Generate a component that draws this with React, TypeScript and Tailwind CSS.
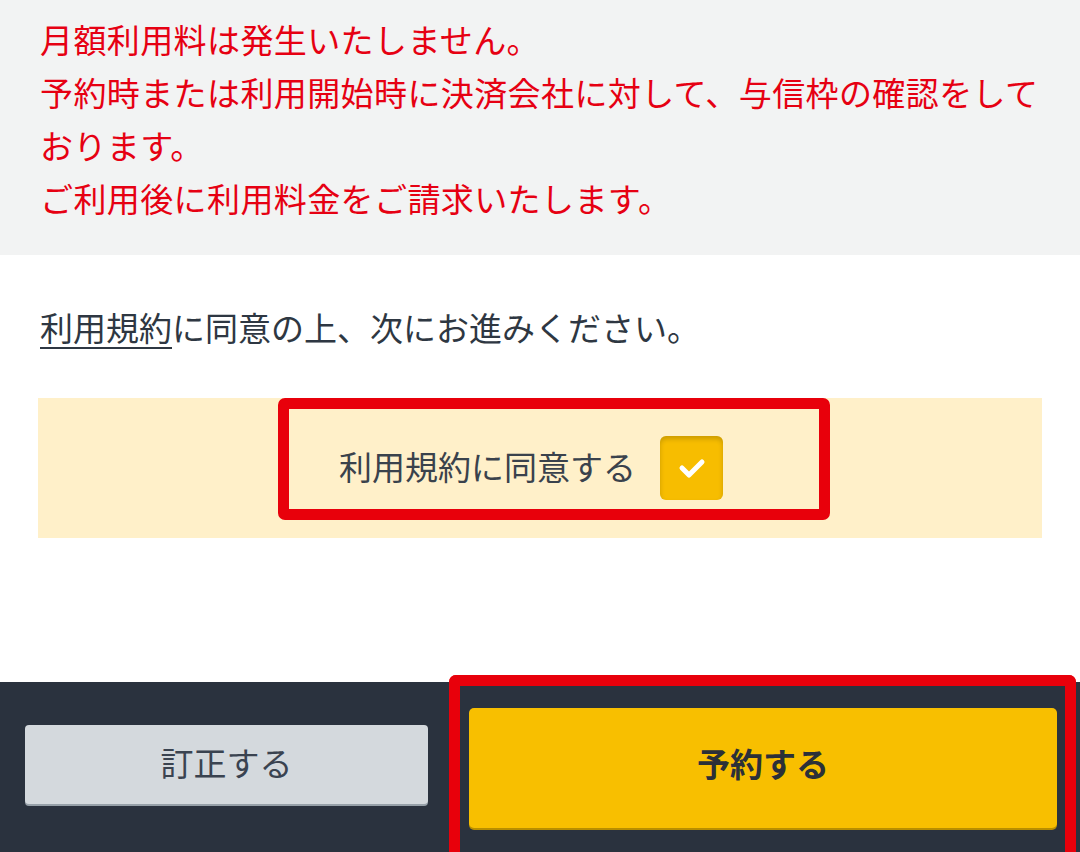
import React, { useState } from 'react';

const notices = [
  '月額利用料は発生いたしません。',
  '予約時または利用開始時に決済会社に対して、与信枠の確認をしております。',
  'ご利用後に利用料金をご請求いたします。',
];

export default function App() {
  const [agreed, setAgreed] = useState(true);

  return (
    <div className="w-[1080px] h-[852px] overflow-hidden bg-white flex flex-col font-['Noto_Sans_CJK_JP','Noto_Sans',sans-serif]">
      {/* Payment notice */}
      <div className="bg-[#f2f3f3] pl-10 pr-[38px] pt-[13px] pb-[30px]">
        {notices.map((line) => (
          <p key={line} className="text-[33px] tracking-[0.4px] leading-[53px] text-[#e60012]">
            {line}
          </p>
        ))}
      </div>

      {/* Terms agreement */}
      <p className="mt-[46px] px-10 text-[33px] leading-[53px] text-[#2e3742]">
        <span className="underline decoration-2 underline-offset-[6px]">利用規約</span>
        に同意の上、次にお進みください。
      </p>

      <div className="relative mx-[38px] mt-[44px] h-[140px] bg-[#fff0c9] flex items-center justify-center pr-[18px]">
        <span className="text-[33px] leading-none text-[#3a424c] -mt-[4px]">利用規約に同意する</span>
        <button
          onClick={() => setAgreed(!agreed)}
          className={`ml-6 w-[63px] h-[64px] rounded-md flex items-center justify-center shadow-[inset_0_3px_5px_rgba(0,0,0,0.18)] ${
            agreed ? 'bg-[#f7bd00]' : 'bg-white'
          }`}
        >
          {agreed && (
            <svg width="28" height="22" viewBox="0 0 28 22" fill="none">
              <polyline points="4,11 11,18 24,5" stroke="white" strokeWidth="5" strokeLinecap="round" strokeLinejoin="round" />
            </svg>
          )}
        </button>
        {/* annotation frame */}
        <div className="absolute left-[240px] top-0 w-[552px] h-[122px] border-[11px] border-[#e8000b] rounded-[7px] pointer-events-none" />
      </div>

      {/* Footer actions */}
      <div className="relative mt-[144px] h-[170px] bg-[#2a323e] flex items-start pl-[25px]">
        <button className="mt-[43px] w-[403px] h-[79px] pb-[4px] rounded-[4px] bg-[#d4d9dd] shadow-[0_2px_0_#96a0a8] text-[33px] text-[#3a4350]">
          訂正する
        </button>
        <button className="mt-[26px] ml-[41px] w-[588px] h-[120px] pb-[8px] rounded-[5px] bg-[#f8bf00] shadow-[0_2px_0_#b88e00] text-[33px] font-bold text-[#2b3038]">
          予約する
        </button>
        {/* annotation frame */}
        <div className="absolute left-[449px] right-[4px] top-[-7px] bottom-0 border-[11px] border-b-0 border-[#e8000b] rounded-t-[7px] pointer-events-none" />
      </div>
    </div>
  );
}
